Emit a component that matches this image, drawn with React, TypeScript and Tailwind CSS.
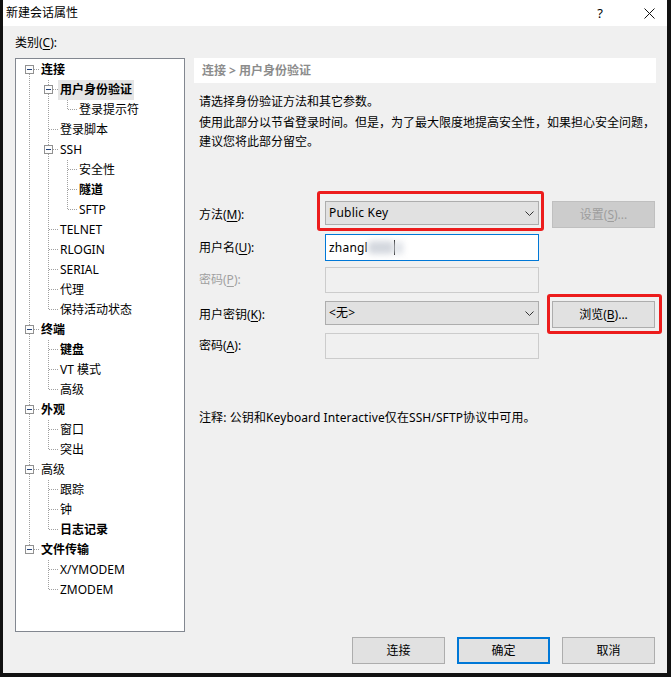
import type { ReactNode } from 'react'

type Node = { label: string; level: number; bold?: boolean; box?: boolean; selected?: boolean }

const tree: Node[] = [
  { label: '连接', level: 0, bold: true, box: true },
  { label: '用户身份验证', level: 1, bold: true, box: true, selected: true },
  { label: '登录提示符', level: 2 },
  { label: '登录脚本', level: 1 },
  { label: 'SSH', level: 1, box: true },
  { label: '安全性', level: 2 },
  { label: '隧道', level: 2, bold: true },
  { label: 'SFTP', level: 2 },
  { label: 'TELNET', level: 1 },
  { label: 'RLOGIN', level: 1 },
  { label: 'SERIAL', level: 1 },
  { label: '代理', level: 1 },
  { label: '保持活动状态', level: 1 },
  { label: '终端', level: 0, bold: true, box: true },
  { label: '键盘', level: 1, bold: true },
  { label: 'VT 模式', level: 1 },
  { label: '高级', level: 1 },
  { label: '外观', level: 0, bold: true, box: true },
  { label: '窗口', level: 1 },
  { label: '突出', level: 1 },
  { label: '高级', level: 0, box: true },
  { label: '跟踪', level: 1 },
  { label: '钟', level: 1 },
  { label: '日志记录', level: 1, bold: true },
  { label: '文件传输', level: 0, bold: true, box: true },
  { label: 'X/YMODEM', level: 1 },
  { label: 'ZMODEM', level: 1 },
]

// does an item at `level` follow row i before the branch closes
function continues(i: number, level: number) {
  for (let j = i + 1; j < tree.length; j++) {
    if (tree[j].level < level) return false
    if (tree[j].level === level) return true
  }
  return false
}

const dot = { stroke: '#a0a0a0', strokeWidth: 1, strokeDasharray: '1 1' }

function Guide({ on }: { on: boolean }) {
  return (
    <svg width="19" height="20" className="shrink-0">
      {on && <line x1="9.5" y1="0" x2="9.5" y2="20" {...dot} />}
    </svg>
  )
}

function Connector({ node, index }: { node: Node; index: number }) {
  const up = index !== 0
  const down = continues(index, node.level)
  return (
    <svg width="19" height="20" className="shrink-0">
      {node.box ? (
        <>
          {up && <line x1="9.5" y1="0" x2="9.5" y2="5" {...dot} />}
          {down && <line x1="9.5" y1="14" x2="9.5" y2="20" {...dot} />}
          <line x1="14" y1="9.5" x2="19" y2="9.5" {...dot} />
          <rect x="5.5" y="5.5" width="8" height="8" fill="#fcfcfc" stroke="#919191" />
          <rect x="7" y="9" width="5" height="1" fill="#1e3f7a" />
        </>
      ) : (
        <>
          <line x1="9.5" y1="0" x2="9.5" y2={down ? 20 : 10} {...dot} />
          <line x1="10" y1="9.5" x2="19" y2="9.5" {...dot} />
        </>
      )}
    </svg>
  )
}

function TreeRow({ node, index }: { node: Node; index: number }) {
  // for each ancestor level, whether its line passes through this row
  const guides: boolean[] = []
  for (let k = 0; k < node.level; k++) guides.push(continues(index, k))
  return (
    <div className="flex h-[20px] items-center">
      {guides.map((on, k) => <Guide key={k} on={on} />)}
      <Connector node={node} index={index} />
      <span
        className={`h-[20px] leading-[20px] px-[2px] whitespace-nowrap ${node.bold ? 'font-bold' : ''} ${node.selected ? 'bg-[#e5e5e5]' : ''}`}
      >
        {node.label}
      </span>
    </div>
  )
}

function Key({ k }: { k: string }) {
  return <span className="underline underline-offset-2">{k}</span>
}

function Chevron() {
  return (
    <svg width="9" height="5" viewBox="0 0 9 5">
      <polyline points="0.5,0.5 4.5,4.5 8.5,0.5" fill="none" stroke="#333" strokeWidth="1" />
    </svg>
  )
}

function Label({ children, disabled }: { children: ReactNode; disabled?: boolean }) {
  return (
    <div className={`w-[126px] h-full flex items-center leading-[16px] ${disabled ? 'text-[#a0a0a0]' : ''}`}>
      {children}
    </div>
  )
}

function Combo({ value }: { value: string }) {
  return (
    <div className="w-[214px] h-[24px] border border-[#adadad] bg-[#e1e1e1] flex items-center justify-between pl-[3px] pr-[4px]">
      <span className="tracking-[0.2px]">{value}</span>
      <Chevron />
    </div>
  )
}

function Button({ children, disabled }: { children: ReactNode; disabled?: boolean }) {
  const cls = disabled
    ? 'border border-[#bfbfbf] bg-[#cccccc] text-[#9d9d9d]'
    : 'border border-[#adadad] bg-[#e1e1e1]'
  return (
    <div className={`w-[103px] h-[27px] flex items-center justify-center ${cls}`}>{children}</div>
  )
}

function DlgButton({ children, focused }: { children: ReactNode; focused?: boolean }) {
  return (
    <div
      className={`w-[93px] h-[27px] flex items-center justify-center bg-[#e1e1e1] ${focused ? 'border-2 border-[#0078d7]' : 'border border-[#adadad]'}`}
    >
      {children}
    </div>
  )
}

export default function App() {
  return (
    <div className="w-[671px] h-[677px] flex flex-col bg-white border-l-[3px] border-r-4 border-b-4 border-[#111] font-['Noto_Sans','Noto_Sans_CJK_SC',sans-serif] text-[12px] text-black">
      <div className="h-[26px] shrink-0 flex items-center pl-[3px] bg-white">
        <span className="leading-[16px]">新建会话属性</span>
        <span className="ml-auto text-[13px] leading-[16px]">?</span>
        <svg width="11" height="11" viewBox="0 0 11 11" className="ml-[41px] mr-[12px]">
          <path d="M0.5 0.5 L10.5 10.5 M10.5 0.5 L0.5 10.5" stroke="#111" strokeWidth="1" />
        </svg>
      </div>

      <div className="relative flex-1 bg-[#f0f0f0] pl-[12px] pt-[9px] flex flex-col">
        <div className="h-[16px] leading-[16px]">
          类别(<Key k="C" />):
        </div>

        <div className="mt-[7px] flex items-start gap-[9px]">
          <div className="w-[170px] h-[574px] shrink-0 border border-[#828790] bg-white pl-[4px] pt-[1px]">
            {tree.map((n, i) => <TreeRow key={i} node={n} index={i} />)}
          </div>

          <div className="w-[462px] h-[606px] flex flex-col">
            <div className="h-[25px] bg-white flex items-center pl-[8px] text-[#8c8c8c] font-bold">
              连接 &gt; 用户身份验证
            </div>
            <p className="mt-[9px] pl-[5px] leading-[19px]">请选择身份验证方法和其它参数。</p>
            <p className="mt-[2px] pl-[5px] leading-[19px] whitespace-nowrap">
              使用此部分以节省登录时间。但是，为了最大限度地提高安全性，如果担心安全问题，
              <br />
              建议您将此部分留空。
            </p>

            <div className="mt-[50px] pl-[5px] flex flex-col">
              <div className="flex h-[27px] items-start">
                <Label>方法(<Key k="M" />):</Label>
                <Combo value="Public Key" />
                <div className="ml-[13px]">
                  <Button disabled>设置(<Key k="S" />)...</Button>
                </div>
              </div>

              <div className="mt-[6px] flex h-[27px] items-start">
                <Label>用户名(<Key k="U" />):</Label>
                <div className="w-[214px] h-[27px] border border-[#0078d7] bg-white flex items-center pl-[3px]">
                  <span className="tracking-[0.2px]">zhangl</span>
                  <span className="inline-block w-[26px] h-[13px] rounded-[4px] bg-[#d3d7de] blur-[3px]" />
                  <span className="inline-block w-px h-[15px] bg-black" />
                  <span className="inline-block w-[8px] h-[12px] bg-[#dde1e7] blur-[3px]" />
                </div>
              </div>

              <div className="mt-[6px] flex h-[26px] items-start">
                <Label disabled>密码(<Key k="P" />):</Label>
                <div className="w-[214px] h-[26px] border border-[#cccccc] bg-[#f0f0f0]" />
              </div>

              <div className="mt-[8px] flex h-[27px] items-start">
                <Label>用户密钥(<Key k="K" />):</Label>
                <Combo value="<无>" />
                <div className="ml-[13px]">
                  <Button>浏览(<Key k="B" />)...</Button>
                </div>
              </div>

              <div className="mt-[5px] flex h-[26px] items-start">
                <Label>密码(<Key k="A" />):</Label>
                <div className="w-[214px] h-[26px] border border-[#cccccc] bg-[#f0f0f0]" />
              </div>
            </div>

            <p className="mt-[49px] pl-[5px] leading-[19px] tracking-[0.1px]">
              注释: 公钥和Keyboard Interactive仅在SSH/SFTP协议中可用。
            </p>

            <div className="mt-auto flex justify-end gap-[12px] pr-[1px]">
              <DlgButton>连接</DlgButton>
              <DlgButton focused>确定</DlgButton>
              <DlgButton>取消</DlgButton>
            </div>
          </div>
        </div>

        {/* red highlight boxes drawn over the form */}
        <div className="absolute left-[314px] top-[165px] w-[227px] h-[40px] border-[3px] border-[#ec1c1c] rounded-[3px]" />
        <div className="absolute left-[544px] top-[268px] w-[115px] h-[40px] border-[3px] border-[#ec1c1c] rounded-[3px]" />
      </div>
    </div>
  )
}
